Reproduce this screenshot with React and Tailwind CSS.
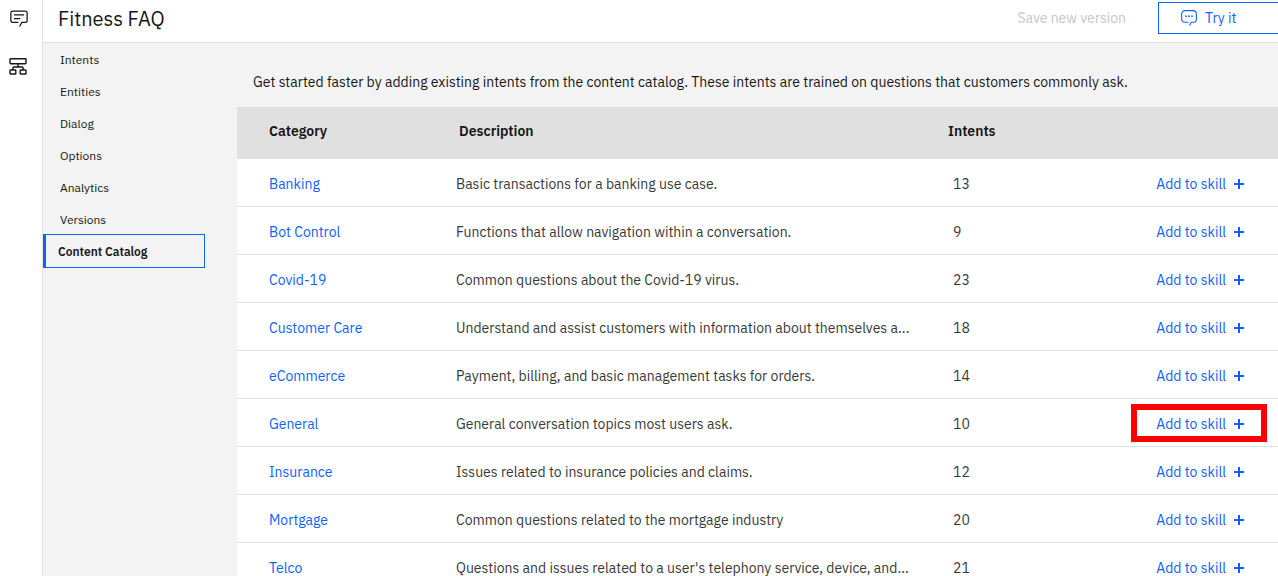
const navItems = ["Intents", "Entities", "Dialog", "Options", "Analytics", "Versions", "Content Catalog"];

const categories = [
  { name: "Banking", description: "Basic transactions for a banking use case.", intents: 13 },
  { name: "Bot Control", description: "Functions that allow navigation within a conversation.", intents: 9 },
  { name: "Covid-19", description: "Common questions about the Covid-19 virus.", intents: 23 },
  { name: "Customer Care", description: "Understand and assist customers with information about themselves a...", intents: 18 },
  { name: "eCommerce", description: "Payment, billing, and basic management tasks for orders.", intents: 14 },
  { name: "General", description: "General conversation topics most users ask.", intents: 10, highlighted: true },
  { name: "Insurance", description: "Issues related to insurance policies and claims.", intents: 12 },
  { name: "Mortgage", description: "Common questions related to the mortgage industry", intents: 20 },
  { name: "Telco", description: "Questions and issues related to a user's telephony service, device, and...", intents: 21 },
];

function ChatIcon() {
  return (
    <svg viewBox="0 0 32 32" className="size-5" fill="currentColor" aria-hidden="true">
      <path d="M17.74 30 16 29l4-7h6a2 2 0 0 0 2-2V8a2 2 0 0 0-2-2H6a2 2 0 0 0-2 2v12a2 2 0 0 0 2 2h9v2H6a4 4 0 0 1-4-4V8a4 4 0 0 1 4-4h20a4 4 0 0 1 4 4v12a4 4 0 0 1-4 4h-4.84Z" />
      <path d="M8 10h16v2H8zM8 16h10v2H8z" />
    </svg>
  );
}

function AssistantsIcon() {
  return (
    <svg viewBox="0 0 20 20" className="size-5" fill="none" stroke="currentColor" strokeWidth="1.4" aria-hidden="true">
      <rect x="1" y="2.7" width="16" height="5" rx="0.6" />
      <rect x="1" y="14" width="5.8" height="4" rx="0.6" />
      <rect x="11.2" y="14" width="5.8" height="4" rx="0.6" />
      <path d="M9 7.700v3.200M3.900 14v-2a1 1 0 0 1 1-1h8.200a1 1 0 0 1 1 1v2" />
    </svg>
  );
}

function TryIcon() {
  return (
    <svg viewBox="0 0 16 16" className="size-4" fill="none" stroke="currentColor" aria-hidden="true">
      <path strokeWidth="1.1" d="M7.5 12.3H4A3.4 3.4 0 0 1 .6 8.9V4A3.4 3.4 0 0 1 4 .6h8A3.4 3.4 0 0 1 15.4 4v4.9a3.4 3.4 0 0 1-3.4 3.4h-1.7L8.5 15.5" />
      <path strokeWidth="1.4" d="M4.2 6.300h1.600M7.200 6.300h1.600M10.200 6.300h1.600" />
    </svg>
  );
}

function PlusIcon() {
  return (
    <svg viewBox="0 0 10 10" className="size-[10px]" fill="currentColor" aria-hidden="true">
      <path d="M4 0h2v4h4v2H6v4H4V6H0V4h4z" />
    </svg>
  );
}

export default function App() {
  return (
    <div className="flex h-screen overflow-hidden bg-[#f3f3f3] font-['IBM_Plex_Sans','Noto_Sans',sans-serif] text-sm text-[#161616]">
      <nav aria-label="Products" className="flex w-[43px] shrink-0 flex-col items-center gap-7 border-r border-[#e0e0e0] bg-white pt-2 pr-1">
        <a href="#skills" aria-label="Skills"><ChatIcon /></a>
        <a href="#assistants" aria-label="Assistants"><AssistantsIcon /></a>
      </nav>

      <div className="flex min-w-0 flex-1 flex-col">
        <header className="flex h-[43px] shrink-0 items-start border-b border-[#e0e0e0] bg-white pl-[15px]">
          <h1 className="flex-1 pt-1 text-xl leading-[30px]">Fitness FAQ</h1>
          <div className="flex items-center gap-8 pt-[2px]">
            <button type="button" disabled className="text-[#c6c6c6]">Save new version</button>
            <button type="button" className="flex h-8 w-[120px] items-center gap-2 border border-r-0 border-[#0f62fe] pl-[22px] text-[#0f62fe]">
              <TryIcon />
              Try it
            </button>
          </div>
        </header>

        <div className="flex min-h-0 flex-1">
          <nav aria-label="Skill" className="w-[194px] shrink-0 pt-px text-xs">
            <ul>
              {navItems.map((item) => (
                <li key={item}>
                  {item === "Content Catalog" ? (
                    <a href="#content-catalog" aria-current="page" className="-mt-[2px] flex h-[34px] w-[162px] items-center border border-l-[3px] border-[#0f62fe] pt-[2px] pl-3 font-semibold">
                      {item}
                    </a>
                  ) : (
                    <a href={"#" + item.toLowerCase()} className="flex h-8 items-center pl-[17px]">{item}</a>
                  )}
                </li>
              ))}
            </ul>
          </nav>

          <main className="min-w-0 flex-1 overflow-y-auto [scrollbar-width:none]">
            <p className="pt-[29px] pb-[15px] pl-4 leading-5">
              Get started faster by adding existing intents from the content catalog. These intents are trained on questions that customers commonly ask.
            </p>
            <table className="w-full table-fixed border-separate border-spacing-0 text-left">
              <thead className="bg-[#e0e0e0]">
                <tr className="h-[52px]">
                  <th scope="col" className="w-[203px] pb-1 pl-8 font-semibold">Category</th>
                  <th scope="col" className="pb-1 pl-[19px] font-semibold">Description</th>
                  <th scope="col" className="w-[178px] pb-1 pl-[11px] font-semibold">Intents</th>
                  <th scope="col" aria-label="Actions" className="w-[163px]" />
                </tr>
              </thead>
              <tbody className="bg-white text-[#393939]">
                {categories.map(({ name, description, intents, highlighted }) => (
                  <tr key={name} className="h-12 *:border-b *:border-[#e0e0e0] *:pt-[3px]">
                    <td className="pl-8"><a href={"#" + name} className="text-[#0f62fe]">{name}</a></td>
                    <td className="truncate pl-4">{description}</td>
                    <td className="pl-4">{intents}</td>
                    <td className="pr-[34px]">
                      <button type="button" className="relative ml-auto flex items-center gap-2 text-[#0f62fe]">
                        Add to skill
                        <PlusIcon />
                        {highlighted && <span className="absolute -top-[10px] -right-[23px] -bottom-2 -left-[25px] border-6 border-[#ff0000]" />}
                      </button>
                    </td>
                  </tr>
                ))}
              </tbody>
            </table>
          </main>
        </div>
      </div>
    </div>
  );
}
